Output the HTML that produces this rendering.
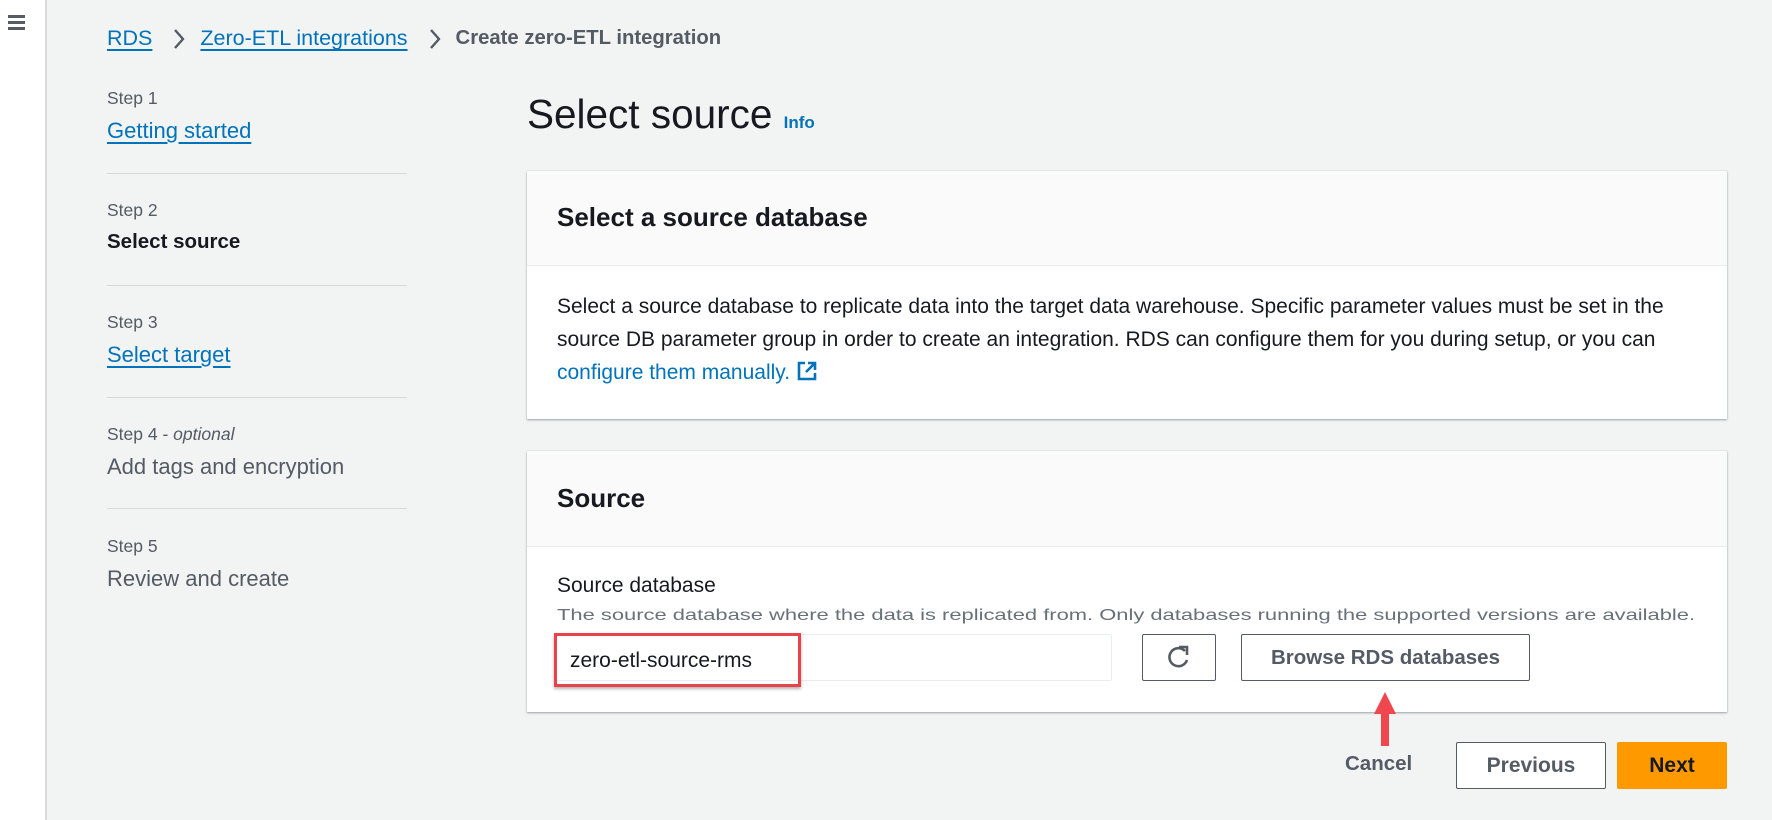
<!DOCTYPE html>
<html><head><meta charset="utf-8"><style>
*{box-sizing:border-box;margin:0;padding:0}
body{width:1772px;height:820px;background:#f2f3f3;font-family:"Liberation Sans",sans-serif;color:#16191f;position:relative;overflow:hidden}
.abs{position:absolute;white-space:nowrap}
.side{position:absolute;left:0;top:0;width:47px;height:820px;background:#fff;border-right:2px solid #d5dbdb}
.ham{position:absolute;left:8px;width:17px;height:3px;background:#545b64}
.lnk{color:#0073bb;text-decoration:underline;text-underline-offset:4px}
.step{font-size:17.5px;color:#545b64}
.lbl{font-size:22px}
.div{position:absolute;left:107px;width:300px;height:1px;background:#d5dbdb}
.card{position:absolute;left:527px;width:1200px;background:#fff;box-shadow:0 1px 2px rgba(0,28,36,.35),0 0 0 1px #eaeded}
.ch{background:#fafafa;border-bottom:1px solid #eaeded;position:relative}
.btn{position:absolute;border:1px solid #545b64;border-radius:2px;background:#fff;font-weight:bold;font-size:20.5px;color:#545b64;display:flex;align-items:center;justify-content:center}
.crumbs{position:absolute;left:107px;top:26px;display:flex;align-items:center;white-space:nowrap;font-size:21.5px}
.crumbs svg{margin:0 14px 0 20px}
</style></head><body>
<div class="side"><div class="ham" style="top:15px"></div><div class="ham" style="top:21px"></div><div class="ham" style="top:27px"></div></div>

<div class="crumbs"><span class="lnk">RDS</span><svg width="14" height="22"><path d="M3 2l8 9-8 9" fill="none" stroke="#545b64" stroke-width="2.4"/></svg><span class="lnk">Zero-ETL integrations</span><svg width="14" height="22"><path d="M3 2l8 9-8 9" fill="none" stroke="#545b64" stroke-width="2.4"/></svg><span style="color:#545b64;font-weight:bold;font-size:20.3px">Create zero-ETL integration</span></div>

<div class="abs step" style="left:107px;top:88px">Step 1</div>
<div class="abs lbl" style="left:107px;top:118px"><span class="lnk">Getting started</span></div>
<div class="div" style="top:173px"></div>
<div class="abs step" style="left:107px;top:200px">Step 2</div>
<div class="abs lbl" style="left:107px;top:230px;font-weight:bold;font-size:20.5px">Select source</div>
<div class="div" style="top:285px"></div>
<div class="abs step" style="left:107px;top:312px">Step 3</div>
<div class="abs lbl" style="left:107px;top:342px"><span class="lnk">Select target</span></div>
<div class="div" style="top:397px"></div>
<div class="abs step" style="left:107px;top:424px">Step 4 - <i>optional</i></div>
<div class="abs lbl" style="left:107px;top:454px;color:#545b64">Add tags and encryption</div>
<div class="div" style="top:508px"></div>
<div class="abs step" style="left:107px;top:536px">Step 5</div>
<div class="abs lbl" style="left:107px;top:566px;color:#545b64">Review and create</div>

<div class="abs" style="left:527px;top:91px;font-size:40.5px">Select source <span style="font-size:17px;font-weight:bold;color:#0073bb">Info</span></div>

<div class="card" style="top:171px;height:248px">
 <div class="ch" style="height:95px"><div class="abs" style="left:30px;top:31px;font-size:26px;font-weight:bold">Select a source database</div></div>
 <div style="padding:24px 30px 0 30px;font-size:21px;line-height:33px;white-space:nowrap">Select a source database to replicate data into the target data warehouse. Specific parameter values must be set in the<br>source DB parameter group in order to create an integration. RDS can configure them for you during setup, or you can<br><span style="color:#0073bb">configure them manually.</span> <svg width="22" height="22" style="vertical-align:-3px"><path d="M9 3H3v16h16v-6M12 3h7v7M19 3l-9 9" fill="none" stroke="#0073bb" stroke-width="2.6"/></svg></div>
</div>

<div class="card" style="top:451px;height:261px">
 <div class="ch" style="height:96px"><div class="abs" style="left:30px;top:32px;font-size:26px;font-weight:bold">Source</div></div>
 <div class="abs" style="left:30px;top:123px;font-size:21px">Source database</div>
 <div class="abs" style="left:30px;top:156px;font-size:16px;color:#687078;transform:scaleX(1.37);transform-origin:left">The source database where the data is replicated from. Only databases running the supported versions are available.</div>
 <div class="abs" style="left:27px;top:183px;width:558px;height:47px;border:1px solid #eaeded;border-radius:2px"></div>
 <div class="abs" style="left:27px;top:182px;width:247px;height:54px;border:3px solid #e8434b;box-shadow:0 2px 3px rgba(0,0,0,.3)"></div>
 <div class="abs" style="left:43px;top:198px;font-size:21px">zero-etl-source-rms</div>
 <div class="btn" style="left:615px;top:183px;width:74px;height:47px"><svg width="26" height="28"><path d="M19 7A9 9 0 1 0 21 16" fill="none" stroke="#545b64" stroke-width="2.6"/><path d="M13 3h8v8" fill="none" stroke="#545b64" stroke-width="2.6"/></svg></div>
 <div class="btn" style="left:714px;top:183px;width:289px;height:47px">Browse RDS databases</div>
</div>

<svg class="abs" style="left:1370px;top:690px" width="30" height="62"><path d="M15 2L26 24H19V56H11V24H4Z" fill="#f0474f"/></svg>

<div class="abs" style="left:1345px;top:752px;font-size:20.5px;font-weight:bold;color:#545b64">Cancel</div>
<div class="btn" style="left:1456px;top:742px;width:150px;height:47px;font-size:21px">Previous</div>
<div class="btn" style="left:1617px;top:742px;width:110px;height:47px;background:#ff9900;border-color:#ff9900;color:#16191f;font-size:21px">Next</div>
</body></html>
